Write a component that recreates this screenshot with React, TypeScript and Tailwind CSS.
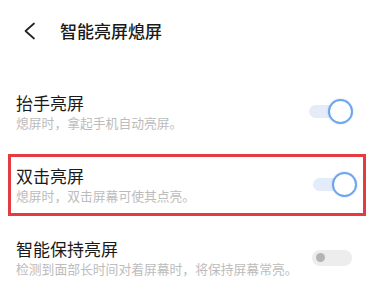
const font = { fontFamily: '"Noto Sans CJK SC", "Noto Sans", sans-serif' }

// ─── Toggle ───────────────────────────────────────────────────────────────────

function Toggle({ on }: { on: boolean }) {
  if (on) {
    return (
      <div className="relative h-[25px] w-[44px] shrink-0">
        <div className="absolute left-0 top-[6px] h-[13px] w-[36px] rounded-full bg-[#e4ecfa]" />
        <div className="absolute right-0 top-0 h-[25px] w-[25px] rounded-full border-[2.5px] border-[#6ea5ec] bg-white shadow-[0_0_2px_rgba(80,140,230,0.35)]" />
      </div>
    )
  }
  return (
    <div className="flex h-[16px] w-[40px] shrink-0 items-center rounded-full bg-[#ededed] pl-[4px]">
      <div className="h-[9px] w-[9px] rounded-full bg-[#b4b4b4]" />
    </div>
  )
}

// ─── SettingRow ───────────────────────────────────────────────────────────────

type RowProps = {
  title: string
  desc: string
  on: boolean
}

function RowContent({ title, desc, on }: RowProps) {
  return (
    <>
      <div className="flex flex-col">
        <span className="text-[17px] leading-[22px] text-[#1a1a1a]">{title}</span>
        <span className="text-[12.8px] leading-[17px] text-[#bcbcbc]">{desc}</span>
      </div>
      <Toggle on={on} />
    </>
  )
}

export default function App() {
  return (
    <div className="h-[307px] w-[374px] overflow-hidden bg-white" style={font}>
      <div className="flex h-[61px] items-center">
        <svg className="ml-[23px]" width="13" height="18" viewBox="0 0 13 18" fill="none">
          <path d="M11 1.5 L2.5 9 L11 16.5" stroke="#222" strokeWidth="1.7" strokeLinecap="round" strokeLinejoin="round" />
        </svg>
        <span className="ml-[24px] text-[17px] font-medium text-[#1a1a1a]">智能亮屏熄屏</span>
      </div>

      <div className="mt-[14px]">
        <div className="flex h-[73px] items-center justify-between pl-4 pr-[21px]">
          <RowContent title="抬手亮屏" desc="熄屏时，拿起手机自动亮屏。" on />
        </div>

        <div className="flex h-[73px] items-center px-2">
          <div className="flex h-[62px] w-full items-center justify-between border-[3px] border-[#e33b3f] pl-[5px] pr-[6px]">
            <RowContent title="双击亮屏" desc="熄屏时，双击屏幕可使其点亮。" on />
          </div>
        </div>

        <div className="flex h-[73px] items-center justify-between pl-4 pr-[22px]">
          <RowContent title="智能保持亮屏" desc="检测到面部长时间对着屏幕时，将保持屏幕常亮。" on={false} />
        </div>
      </div>
    </div>
  )
}
